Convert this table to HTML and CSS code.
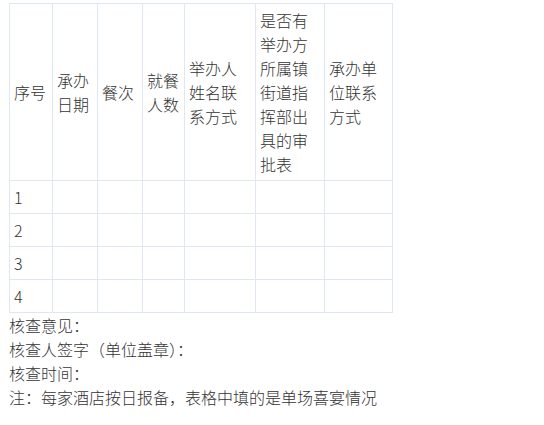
FILE: index.html
```html
<!DOCTYPE html>
<html lang="zh-CN">
<head>
<meta charset="utf-8">
<title>喜宴报备表</title>
<link rel="stylesheet" href="styles.css">
</head>
<body>
<table class="report">
  <colgroup>
    <col class="c1"><col class="c2"><col class="c3"><col class="c4"><col class="c5"><col class="c6"><col class="c7">
  </colgroup>
  <thead>
    <tr>
      <th>序号</th>
      <th>承办日期</th>
      <th>餐次</th>
      <th>就餐人数</th>
      <th>举办人姓名联系方式</th>
      <th>是否有举办方所属镇街道指挥部出具的审批表</th>
      <th>承办单位联系方式</th>
    </tr>
  </thead>
  <tbody>
    <tr><td>1</td><td></td><td></td><td></td><td></td><td></td><td></td></tr>
    <tr><td>2</td><td></td><td></td><td></td><td></td><td></td><td></td></tr>
    <tr><td>3</td><td></td><td></td><td></td><td></td><td></td><td></td></tr>
    <tr><td>4</td><td></td><td></td><td></td><td></td><td></td><td></td></tr>
  </tbody>
</table>
<p class="note">核查意见：</p>
<p class="note">核查人签字（单位盖章）：</p>
<p class="note">核查时间：</p>
<p class="note">注：每家酒店按日报备，表格中填的是单场喜宴情况</p>
</body>
</html>
```
FILE: styles.css
```css
html, body {
  margin: 0;
  padding: 0;
  background: #fff;
}
body {
  padding: 3px 9px;
  font-family: "Noto Sans CJK SC", "Noto Sans", sans-serif;
  font-size: 16px;
  font-weight: 300;
  line-height: 24px;
  color: #333;
}
.report {
  border-collapse: collapse;
  table-layout: fixed;
  width: 384px;
}
.c1 { width: 43px; }
.c2 { width: 45px; }
.c3 { width: 45px; }
.c4 { width: 42px; }
.c5 { width: 71px; }
.c6 { width: 69px; }
.c7 { width: 68px; }
.report th,
.report td {
  border: 1px solid #dfe8f2;
  padding: 4px 4px;
  text-align: left;
  vertical-align: middle;
  font-weight: 300;
  height: 24px;
}
.note {
  margin: 0;
}
```
